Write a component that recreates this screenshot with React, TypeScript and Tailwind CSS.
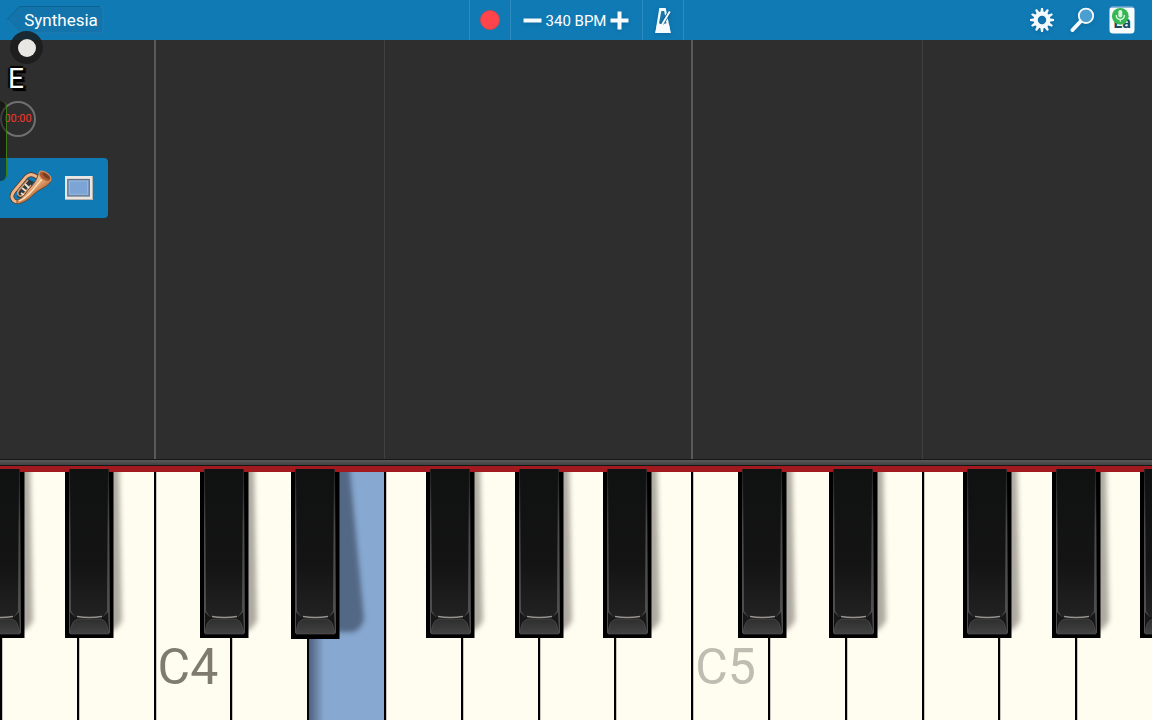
type Accidental = { className: string; tall?: boolean }

type PianoKey = {
  note: string
  label?: string
  labelClass?: string
  pressed?: boolean
  blacks?: Accidental[]
}

// each black key hangs off the white key to its right
const KEYS: PianoKey[] = [
  { note: 'A3', blacks: [{ className: '-left-[26px]' }] },
  { note: 'B3', blacks: [{ className: '-left-[14px]' }] },
  { note: 'C4', label: 'C4', labelClass: 'text-[#7f7b6f]' },
  { note: 'D4', blacks: [{ className: '-left-[32px]' }] },
  { note: 'E4', pressed: true, blacks: [{ className: '-left-[18px]', tall: true }] },
  { note: 'F4' },
  { note: 'G4', blacks: [{ className: '-left-[37px]' }] },
  { note: 'A4', blacks: [{ className: '-left-[25px]' }] },
  { note: 'B4', blacks: [{ className: '-left-[13px]' }] },
  { note: 'C5', label: 'C5', labelClass: 'text-[#bfbcb1]' },
  { note: 'D5', blacks: [{ className: '-left-[32px]' }] },
  { note: 'E5', blacks: [{ className: '-left-[18px]' }] },
  { note: 'F5' },
  { note: 'G5', blacks: [{ className: '-left-[37px]' }] },
  { note: 'A5', blacks: [{ className: '-left-[25px]' }, { className: '-right-[66px]' }] },
]

function Gear() {
  const teeth = Array.from({ length: 12 }, (_, i) => i * 30)
  return (
    <svg width="26" height="26" viewBox="0 0 26 26" className="drop-shadow-sm">
      {teeth.map((a) => (
        <path key={a} d="M11.3 6 L12 1 H14 L14.7 6 Z" fill="#f4fafc" transform={`rotate(${a} 13 13)`} />
      ))}
      <circle cx="13" cy="13" r="6.3" fill="none" stroke="#f4fafc" strokeWidth="4.2" />
    </svg>
  )
}

function Magnifier() {
  return (
    <svg width="26" height="26" viewBox="0 0 26 26" className="drop-shadow-sm">
      <path d="M11.5 14.5 L3.5 23" stroke="#f4fafc" strokeWidth="4" strokeLinecap="round" />
      <circle cx="17" cy="8.8" r="7.2" fill="#4b9fd0" stroke="#f4fafc" strokeWidth="1.8" />
    </svg>
  )
}

function MicBadge() {
  return (
    <svg width="26" height="28" viewBox="0 0 26 28">
      <rect x="0.5" y="0.5" width="25" height="27" rx="3.5" fill="#f8fbfa" />
      <path d="M1 1 H25" stroke="#2f78b5" strokeWidth="1" />
      <text x="4.5" y="22" fontSize="16" fontWeight="700" fill="#174c68" fontFamily="Roboto, sans-serif">
        La
      </text>
      <circle cx="11.3" cy="10.3" r="8.4" fill="#35b854" />
      <rect x="9.3" y="4" width="4" height="7.5" rx="2" fill="#d9f6df" />
      <path d="M7.2 9 C7.2 14.8 15.4 14.8 15.4 9 M11.3 13.3 V15.8" fill="none" stroke="#d9f6df" strokeWidth="1.3" />
    </svg>
  )
}

function Metronome() {
  return (
    <svg width="18" height="27" viewBox="0 0 18 27" className="drop-shadow-sm">
      <path d="M5.3 1 H11.7 L16.7 26 H1.3 Z" fill="#f7fbfc" />
      <path d="M7.3 4 H10.2 L12.4 16.5 H5 Z" fill="#1677a8" />
      <path d="M7.5 17.5 L15.4 5.5" stroke="#12638f" strokeWidth="3.8" />
      <path d="M7.5 18.5 L15.8 4.5" stroke="#f7fbfc" strokeWidth="1.9" />
      <path d="M1.3 26 L3 17.5 H15 L16.7 26 Z" fill="#f7fbfc" />
    </svg>
  )
}

function Horn() {
  return (
    <svg width="44" height="36" viewBox="0 0 44 36">
      <defs>
        <linearGradient id="brass" x1="0.3" y1="0.3" x2="0.7" y2="0.8">
          <stop offset="0" stopColor="#f9d3ae" />
          <stop offset="0.5" stopColor="#dc9560" />
          <stop offset="1" stopColor="#8d4a27" />
        </linearGradient>
      </defs>
      <path d="M9 20 L19 9 L25 12 L14 29 L8 27 Z" fill="#2c3a41" />
      <path d="M28 7 C24 4 20 4 17 7 L4.5 22 C1 27 4 32 9 32" fill="none" stroke="#57301c" strokeWidth="4.4" />
      <path d="M28 7 C24 4 20 4 17 7 L4.5 22 C1 27 4 32 9 32" fill="none" stroke="#eeb588" strokeWidth="3" />
      <path d="M19 10 L10 20 C7 24 10 28 14 25 L22 15" fill="none" stroke="#d49a70" strokeWidth="1.6" />
      <path d="M13 18 L17 21 M16 14 L20 18 M12 23 L15 25" stroke="#f4e2cf" strokeWidth="1.8" />
      <path
        d="M8 34 C15 33 20 29 24 25 C31 18 38 18 42 11 L30 2.5 C28 10 25 14 20 19 C16 24 13 29 8 30 Z"
        fill="url(#brass)"
        stroke="#693719"
        strokeWidth="0.7"
      />
      <path d="M10 31 C19 28 26 17 33 9" stroke="#ffe2c2" strokeWidth="1.3" fill="none" />
      <ellipse
        cx="36"
        cy="6.4"
        rx="7"
        ry="3.8"
        transform="rotate(38 36 6.4)"
        fill="#a65b34"
        stroke="#d98e5d"
        strokeWidth="1.2"
      />
      <ellipse cx="37.3" cy="5.8" rx="4.3" ry="1.8" transform="rotate(38 37.3 5.8)" fill="#7c3c22" />
    </svg>
  )
}

function Screen() {
  return (
    <svg width="28" height="24" viewBox="0 0 28 24">
      <rect width="28" height="24" fill="#e7e6e4" />
      <path d="M27.5 0 V23.5 H0" fill="none" stroke="#b9b3ae" />
      <rect x="2.8" y="3.5" width="21.5" height="16.5" fill="#7ca5d6" stroke="#68717d" strokeWidth="1.2" />
      <rect x="4.5" y="5.2" width="18" height="13" fill="none" stroke="#94b5db" />
    </svg>
  )
}

function BlackKey({ className, tall }: Accidental) {
  return (
    <svg
      className={`pointer-events-none absolute -top-[3px] z-10 ${className}`}
      width="78"
      height="174"
      viewBox="0 0 78 174"
    >
      <defs>
        <linearGradient id="ebony" x1="0" y1="0" x2="0" y2="1">
          <stop offset="0" stopColor="#101111" />
          <stop offset="0.65" stopColor="#141414" />
          <stop offset="1" stopColor="#222223" />
        </linearGradient>
        <linearGradient id="edge" x1="0" y1="0" x2="0" y2="1">
          <stop offset="0" stopColor="#222" />
          <stop offset="0.35" stopColor="#494949" />
          <stop offset="1" stopColor="#505050" />
        </linearGradient>
        <linearGradient id="lip" x1="0" y1="0" x2="0" y2="1">
          <stop offset="0" stopColor="#2e2e2f" />
          <stop offset="1" stopColor="#434243" />
        </linearGradient>
        <filter id="soft" x="-50%" y="-10%" width="200%" height="120%">
          <feGaussianBlur stdDeviation="2.4" />
        </filter>
        <clipPath id="below">
          <rect x="0" y="3" width="78" height="171" />
        </clipPath>
      </defs>
      <g clipPath="url(#below)">
        {tall ? (
          <path d="M44 -8 H58 L73 150 Q70 161 62 163 H44 Z" fill="#2f3a50" opacity="0.58" filter="url(#soft)" />
        ) : (
          <path d="M42 -8 H54 L57 152 L50 161 H42 Z" fill="#4c4740" opacity="0.45" filter="url(#soft)" />
        )}
        <rect x="0" y="3" width="48.5" height={tall ? 167 : 166} fill="#000" />
      </g>
      <path d="M4 1 Q4 0 5 0 H43 Q44 0 44 1 L45 164 H4 Z" fill="url(#edge)" />
      <path d="M5 0 H43 L42 142 L38 148 H10 L6 142 Z" fill="url(#ebony)" />
      <path d="M5 143 L10 148 H38 L43 143 L44 164 H5 Z" fill="#171717" />
      <path d="M5 165 Q6 150 14 150 H35 Q42 150 44 165 Z" fill="url(#lip)" stroke="#555" strokeWidth="0.6" />
      <path d="M12 147.5 Q24 149.5 37 147.5" fill="none" stroke="#96938f" strokeWidth="1.3" />
    </svg>
  )
}

function TopBar() {
  const cell = 'flex items-center justify-center border-l border-[#2f8cbf]'
  return (
    <header className="grid h-10 shrink-0 grid-cols-[1fr_auto_1fr] bg-[#107ab5] text-white">
      <div className="flex items-center pl-1.5">
        <button type="button" className="relative h-7 w-[98px] pl-3 text-[17px] leading-7">
          <svg className="absolute inset-0" width="98" height="28" viewBox="0 0 98 28">
            <path
              d="M1 14 L12 2 Q13 0.5 15 0.5 H94 Q97 0.5 97 4 V24 Q97 27 94 27 H15 Q13 27 12 25.5 Z"
              fill="#1274ab"
              stroke="#2380b2"
              strokeWidth="0.8"
            />
            <path d="M1 14 L12 2 Q13 0.5 15 0.5 H94" fill="none" stroke="#0b6292" />
          </svg>
          <span className="relative">Synthesia</span>
        </button>
      </div>

      <div className="flex border-r border-[#2f8cbf]">
        <button type="button" aria-label="Record" className={`${cell} w-[41px]`}>
          <span className="size-5 rounded-full border border-[#d1454f] bg-[#ff454b]" />
        </button>
        <div className={`${cell} w-[132px] gap-1`}>
          <button type="button" aria-label="Slower">
            <svg width="19" height="19" viewBox="0 0 19 19" className="drop-shadow-sm">
              <path d="M0.5 9.5 H18.5" stroke="#f7fbfc" strokeWidth="4" />
            </svg>
          </button>
          <span className="pt-0.5 text-[15px] leading-5 whitespace-nowrap">340 BPM</span>
          <button type="button" aria-label="Faster">
            <svg width="19" height="19" viewBox="0 0 19 19" className="drop-shadow-sm">
              <path d="M0.5 9.5 H18.5 M9.5 0.5 V18.5" stroke="#f7fbfc" strokeWidth="4" />
            </svg>
          </button>
        </div>
        <button type="button" aria-label="Metronome" className={`${cell} w-[41px]`}>
          <Metronome />
        </button>
      </div>

      <div className="flex items-center justify-end gap-3.5 pr-[17px]">
        <button type="button" aria-label="Settings">
          <Gear />
        </button>
        <button type="button" aria-label="Search">
          <Magnifier />
        </button>
        <button type="button" aria-label="Note labels">
          <MicBadge />
        </button>
      </div>
    </header>
  )
}

function laneLine(note: string) {
  if (note.startsWith('C')) return 'border-l-2 border-[#5b5858]'
  if (note.startsWith('F')) return 'border-l border-[#404040]'
  return ''
}

export default function App() {
  return (
    <div className="relative flex h-screen min-h-[420px] flex-col overflow-hidden bg-[#2e2e2e] font-['Roboto',sans-serif]">
      <TopBar />

      <main className="relative flex-1">
        <div className="absolute inset-0 grid grid-cols-[repeat(15,minmax(0,1fr))]">
          {KEYS.map((k) => (
            <div key={k.note} className={laneLine(k.note)} />
          ))}
        </div>

        <div className="relative flex flex-col items-start pt-[23px]">
          <span className="ml-2 h-8 text-[28px] leading-8 text-white [text-shadow:2px_2px_1px_#000,3px_0_1px_#000,-2px_0_1px_#000,0_-2px_1px_#000,3px_3px_1px_#000]">
            E
          </span>
          <div className="mt-1.5 flex size-9 items-center justify-center rounded-full border-2 border-[#6f6f6f] text-[11px] leading-4 text-[#f5382c]">
            00:00
          </div>
          <div className="mt-[21px] flex h-[60px] w-[108px] items-center gap-3 rounded-r bg-[#107ab5] pl-[9px]">
            <button type="button" aria-label="Instrument">
              <Horn />
            </button>
            <button type="button" aria-label="Display">
              <Screen />
            </button>
          </div>
        </div>

        {/* pull-out drawer handle */}
        <div className="absolute top-[61px] left-0 h-20 w-[7px] rounded-r-md border-r border-[#3d7c10] bg-black/45" />
      </main>

      {/* touch pointer */}
      <div className="absolute top-[31px] left-[10px] flex size-[33px] items-center justify-center rounded-full bg-[#1b1b1b]/85">
        <span className="size-[18px] rounded-full bg-[#e8e7e3]" />
      </div>

      <div className="h-[7px] shrink-0 border-y border-[#171717] bg-linear-to-b from-[#5a5a5a] to-[#414141]" />
      <div className="h-1.5 shrink-0 bg-[#a2191f]" />

      <div className="grid h-[248px] shrink-0 grid-cols-[repeat(15,minmax(0,1fr))]">
        {KEYS.map((k) => (
          <div
            key={k.note}
            className={`relative flex items-end border-l-2 border-black ${
              k.pressed
                ? 'bg-linear-to-r from-[#4f6180] via-[#87a8d0] via-20% to-[#87a8d0]'
                : 'bg-[#fffcf0] shadow-[inset_1px_0_0_#c9c6bc]'
            }`}
          >
            {k.label && (
              <span className={`mb-6 ml-0.5 text-[50px] leading-[58px] ${k.labelClass}`}>{k.label}</span>
            )}
            {k.blacks?.map((b) => (
              <BlackKey key={b.className} {...b} />
            ))}
          </div>
        ))}
      </div>
    </div>
  )
}
